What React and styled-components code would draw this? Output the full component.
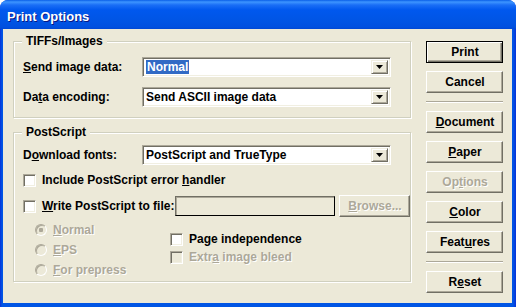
import React from 'react'
import styled, { createGlobalStyle } from 'styled-components'

const GlobalStyle = createGlobalStyle`
  html, body {
    margin: 0;
    padding: 0;
    background: #ffffff;
  }
  body {
    font-family: "Liberation Sans", Arial, sans-serif;
    font-size: 12px;
    font-weight: bold;
    color: #000;
  }
`

const Arrow = () => (
  <svg width="7" height="4" viewBox="0 0 7 4">
    <path d="M0 0h7L3.5 4z" fill="#000" />
  </svg>
)

const Combo = ({ value, selected }) => (
  <ComboBox>
    <ComboText>{selected ? <Selected>{value}</Selected> : value}</ComboText>
    <DropButton>
      <Arrow />
    </DropButton>
  </ComboBox>
)

const Check = ({ label, disabled }) => (
  <CheckRow>
    <CheckBox disabled={disabled} />
    <Label disabled={disabled}>{label}</Label>
  </CheckRow>
)

const Radio = ({ label, checked }) => (
  <RadioRow>
    <RadioDot checked={checked} />
    <Label disabled>{label}</Label>
  </RadioRow>
)

const App = () => {
  return (
    <>
      <GlobalStyle />
      <Window>
        <TitleBar>Print Options</TitleBar>
        <Client>
          <LeftColumn>
            <Group height={77}>
              <GroupTitle>TIFFs/Images</GroupTitle>
              <GroupBody top={15}>
                <FieldRow>
                  <FieldLabel><u>S</u>end image data:</FieldLabel>
                  <Combo value="Normal" selected />
                </FieldRow>
                <FieldRow gap={10}>
                  <FieldLabel>Da<u>t</u>a encoding:</FieldLabel>
                  <Combo value="Send ASCII image data" />
                </FieldRow>
              </GroupBody>
            </Group>

            <Group height={150} gap={14}>
              <GroupTitle>PostScript</GroupTitle>
              <GroupBody top={12}>
                <FieldRow>
                  <FieldLabel>D<u>o</u>wnload fonts:</FieldLabel>
                  <Combo value="PostScript and TrueType" />
                </FieldRow>
                <Spacer h={6} />
                <Check label={<>Include PostScript error <u>h</u>andler</>} />
                <Spacer h={7} />
                <FileRow>
                  <CheckBox />
                  <Label><u>W</u>rite PostScript to file:</Label>
                  <TextBox />
                  <Button disabled width={71}><u>B</u>rowse...</Button>
                </FileRow>
                <Lower>
                  <RadioColumn>
                    <Radio label={<><u>N</u>ormal</>} checked />
                    <Radio label={<><u>E</u>PS</>} />
                    <Radio label={<><u>F</u>or prepress</>} />
                  </RadioColumn>
                  <CheckColumn>
                    <Check label={<>Pa<u>g</u>e independence</>} />
                    <Check label={<>Extr<u>a</u> image bleed</>} disabled />
                  </CheckColumn>
                </Lower>
              </GroupBody>
            </Group>
          </LeftColumn>

          <RightColumn>
            <Button isDefault>Print</Button>
            <Button>Cancel</Button>
            <Separator />
            <Button><u>D</u>ocument</Button>
            <Button><u>P</u>aper</Button>
            <Button disabled>Op<u>t</u>ions</Button>
            <Button><u>C</u>olor</Button>
            <Button>Feat<u>u</u>res</Button>
            <Separator />
            <Button>R<u>e</u>set</Button>
          </RightColumn>
        </Client>
      </Window>
    </>
  )
}

export default App

const Window = styled.div`
  width: 516px;
  height: 307px;
  box-sizing: border-box;
  display: flex;
  flex-direction: column;
  border-radius: 8px 8px 0 0;
  overflow: hidden;
  background: linear-gradient(90deg, #0831d9 0px, #0055e5 2px, #0055e5 513px, #0831d9 516px);
`

const TitleBar = styled.div`
  height: 29px;
  flex: none;
  box-sizing: border-box;
  display: flex;
  align-items: center;
  padding: 3px 0 0 7px;
  color: #fff;
  font-size: 13px;
  font-weight: bold;
  text-shadow: 1px 1px #0a1883;
  background: linear-gradient(
    180deg,
    #0a5fe8 0px,
    #3d95ff 2px,
    #1a6ef6 5px,
    #0058ee 10px,
    #0055e5 20px,
    #0050e0 27px,
    #0047d4 29px
  );
`

const Client = styled.div`
  flex: 1;
  margin: 0 4px 4px 3px;
  background: #ece9d8;
  display: flex;
  gap: 15px;
  padding: 12px 9px 0 10px;
`

const LeftColumn = styled.div`
  width: 399px;
  display: flex;
  flex-direction: column;
`

const Group = styled.div`
  position: relative;
  box-sizing: border-box;
  height: ${p => p.height}px;
  margin-top: ${p => p.gap || 0}px;
  border: 1px solid #d0d0bf;
  box-shadow: inset 1px 1px #fff, 1px 1px #fff;
`

const GroupTitle = styled.span`
  position: absolute;
  top: -8px;
  left: 8px;
  padding: 0 4px;
  background: #ece9d8;
  line-height: 14px;
`

const GroupBody = styled.div`
  display: flex;
  flex-direction: column;
  padding: ${p => p.top}px 0 0 9px;
`

const FieldRow = styled.div`
  display: flex;
  align-items: center;
  height: 20px;
  margin-top: ${p => p.gap || 0}px;
`

const FieldLabel = styled.span`
  width: 119px;
  flex: none;
`

const ComboBox = styled.div`
  width: 249px;
  height: 20px;
  box-sizing: border-box;
  display: flex;
  align-items: stretch;
  background: #fff;
  border: 1px solid;
  border-color: #aca899 #fff #fff #aca899;
  box-shadow: inset 1px 1px #716f64, inset -1px -1px #f1efe2;
  padding: 2px;
`

const ComboText = styled.div`
  flex: 1;
  display: flex;
  align-items: center;
  padding-left: 1px;
  white-space: nowrap;
`

const Selected = styled.span`
  background: #316ac5;
  color: #fff;
  padding: 0 1px;
  line-height: 14px;
`

const DropButton = styled.div`
  width: 17px;
  box-sizing: border-box;
  display: flex;
  align-items: center;
  justify-content: center;
  background: #ece9d8;
  border: 1px solid;
  border-color: #f1efe2 #716f64 #716f64 #f1efe2;
  box-shadow: inset 1px 1px #fff, inset -1px -1px #aca899;
`

const Spacer = styled.div`
  height: ${p => p.h}px;
  flex: none;
`

const CheckRow = styled.div`
  display: flex;
  align-items: center;
  gap: 6px;
  height: 18px;
`

const CheckBox = styled.div`
  width: 13px;
  height: 13px;
  flex: none;
  box-sizing: border-box;
  background: ${p => (p.disabled ? '#ece9d8' : '#fff')};
  border: 1px solid;
  border-color: #aca899 #fff #fff #aca899;
  box-shadow: inset 1px 1px #716f64, inset -1px -1px #f1efe2;
`

const Label = styled.span`
  white-space: nowrap;
  color: ${p => (p.disabled ? '#aca899' : '#000')};
  text-shadow: ${p => (p.disabled ? '1px 1px #fff' : 'none')};
`

const FileRow = styled.div`
  display: flex;
  align-items: center;
  height: 20px;

  & > span {
    margin-left: 6px;
  }
`

const TextBox = styled.div`
  width: 160px;
  height: 20px;
  box-sizing: border-box;
  margin-left: 1px;
  border: 1px solid;
  border-color: #716f64 #000 #000 #716f64;
  box-shadow: inset 1px 1px #aca899;
  background: #ece9d8;
`

const Lower = styled.div`
  display: flex;
  margin-top: 4px;
`

const RadioColumn = styled.div`
  display: flex;
  flex-direction: column;
  width: 135px;
  padding-left: 12px;
`

const RadioRow = styled.div`
  display: flex;
  align-items: center;
  gap: 6px;
  height: 20px;
`

const RadioDot = styled.div`
  width: 12px;
  height: 12px;
  flex: none;
  box-sizing: border-box;
  border-radius: 50%;
  border: 1px solid;
  border-color: #aca899 #fff #fff #aca899;
  box-shadow: inset 1px 1px #aca899;
  background: ${p =>
    p.checked
      ? 'radial-gradient(circle, #aca899 0 2px, #ece9d8 2.5px)'
      : '#ece9d8'};
`

const CheckColumn = styled.div`
  display: flex;
  flex-direction: column;
  margin-top: 10px;
`

const RightColumn = styled.div`
  width: 77px;
  display: flex;
  flex-direction: column;
  gap: 8px;
`

const Button = styled.div`
  width: ${p => p.width || 77}px;
  height: 22px;
  flex: none;
  box-sizing: border-box;
  display: flex;
  align-items: center;
  justify-content: center;
  margin-left: ${p => (p.width ? '4px' : '0')};
  background: #ece9d8;
  border: 1px solid;
  border-color: ${p =>
    p.isDefault ? '#000' : '#fff #716f64 #716f64 #fff'};
  box-shadow: ${p =>
    p.isDefault
      ? 'inset 1px 1px #fff, inset -1px -1px #716f64, inset -2px -2px #aca899'
      : 'inset -1px -1px #aca899'};
  color: ${p => (p.disabled ? '#aca899' : '#000')};
  text-shadow: ${p => (p.disabled ? '1px 1px #fff' : 'none')};
`

const Separator = styled.div`
  height: 2px;
  flex: none;
  border-top: 1px solid #aca899;
  box-sizing: border-box;
  background: transparent;
  box-shadow: inset 0 1px #fff;
`
